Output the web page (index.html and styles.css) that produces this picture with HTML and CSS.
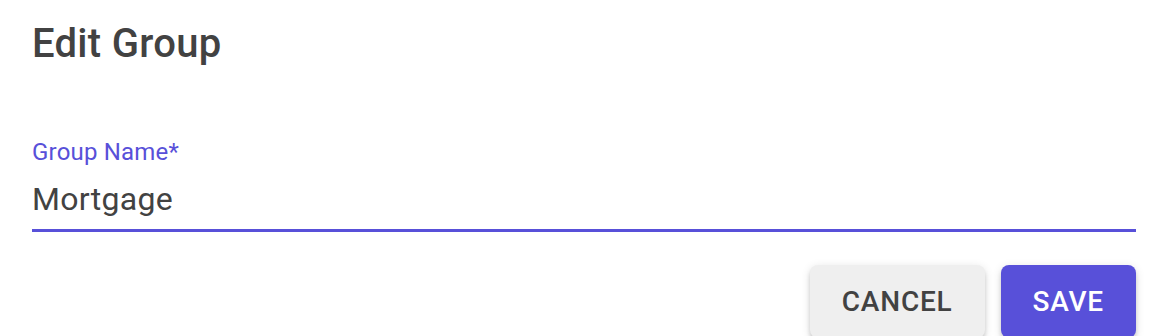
FILE: index.html
```html
<!DOCTYPE html>
<html>
<head>
<meta charset="utf-8">
<link rel="stylesheet" href="styles.css">
</head>
<body>
<div class="dialog">
  <h2 class="title">Edit Group</h2>
  <div class="content">
    <div class="field">
      <label class="label">Group Name*</label>
      <div class="input">Mortgage</div>
    </div>
  </div>
  <div class="actions">
    <button class="btn btn-cancel">CANCEL</button>
    <button class="btn btn-save">SAVE</button>
  </div>
</div>
</body>
</html>
```

FILE: styles.css
```css
html, body {
  margin: 0;
  padding: 0;
  background: #ffffff;
}
body {
  font-family: Roboto, "Liberation Sans", sans-serif;
  color: #424242;
}
.dialog {
  width: 1164px;
  height: 336px;
  overflow: hidden;
  padding: 12px 28px 0 32px;
  box-sizing: border-box;
}
.title {
  margin: 0;
  font-size: 40px;
  font-weight: 500;
  line-height: 64px;
  letter-spacing: 0.3px;
  color: #424242;
}
.content {
  padding-top: 62px;
}
.field {
  display: flex;
  flex-direction: column;
  border-bottom: 3px solid #5850d9;
  padding-bottom: 10px;
}
.label {
  font-size: 24px;
  line-height: 28px;
  color: #5850d9;
  letter-spacing: 0.2px;
}
.input {
  font-size: 32px;
  line-height: 40px;
  padding-top: 13px;
  color: #424242;
  letter-spacing: 0.3px;
}
.actions {
  display: flex;
  justify-content: flex-end;
  gap: 16px;
  padding-top: 33px;
}
.btn {
  font-family: Roboto, "Liberation Sans", sans-serif;
  font-size: 28px;
  font-weight: 500;
  letter-spacing: 0.8px;
  line-height: 49px;
  padding: 12px 32px;
  border: none;
  border-radius: 8px;
  box-shadow: 0 6px 2px -4px rgba(0,0,0,0.2), 0 4px 4px 0 rgba(0,0,0,0.14), 0 2px 10px 0 rgba(0,0,0,0.12);
}
.btn-cancel {
  background: #efefef;
  color: #424242;
}
.btn-save {
  background: #5850d9;
  color: #ffffff;
}
```
